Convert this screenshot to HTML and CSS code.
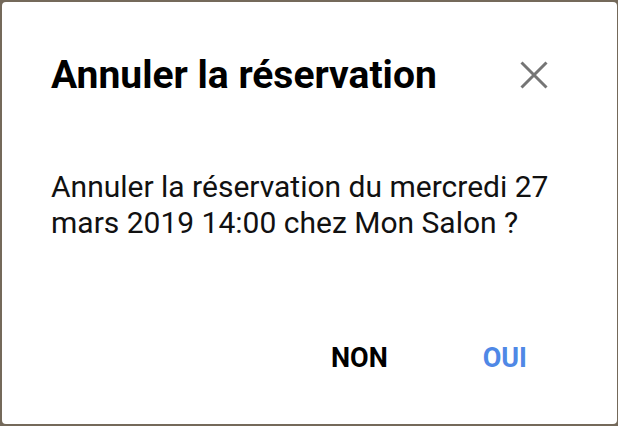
FILE: index.html
```html
<!DOCTYPE html>
<html lang="fr">
<head>
    <meta charset="UTF-8">
    <meta name="viewport" content="width=device-width, initial-scale=1.0">
    <title>Annuler la réservation</title>
    <link rel="stylesheet" href="styles.css">
</head>
<body>

<div class="dialog">
    <div class="dialog-header">
        <h2>Annuler la réservation</h2>
        <button class="close" aria-label="Fermer">
            <svg width="28" height="28" viewBox="0 0 28 28">
                <path d="M1.5 1.5 L26.5 26.5 M26.5 1.5 L1.5 26.5" stroke="#757575" stroke-width="3" fill="none"/>
            </svg>
        </button>
    </div>
    <p class="dialog-body">Annuler la réservation du mercredi 27 mars 2019 14:00 chez Mon Salon ?</p>
    <div class="dialog-actions">
        <button class="btn">NON</button>
        <button class="btn primary">OUI</button>
    </div>
</div>

</body>
</html>
```

FILE: styles.css
```css
body {
    margin: 0;
    padding: 2px 1px 2px 2px;
    font-family: Roboto, "Liberation Sans", sans-serif;
    background-color: #74695a;
    height: 422px;
    box-sizing: content-box;
}
.dialog {
    background-color: white;
    border-radius: 4px;
    height: 422px;
    box-sizing: border-box;
    padding: 0 51px 0 49px;
    display: flex;
    flex-direction: column;
}
.dialog-header {
    display: flex;
    align-items: center;
    justify-content: space-between;
    padding-top: 50px;
}
.dialog-header h2 {
    margin: 0;
    font-size: 39px;
    font-weight: 700;
    line-height: 46px;
    color: #000;
}
.close {
    border: none;
    background: none;
    padding: 0;
    margin-right: 18px;
    width: 28px;
    height: 28px;
    display: flex;
}
.dialog-body {
    margin: 71px 0 0;
    font-size: 30px;
    line-height: 36px;
    color: #111;
}
.dialog-actions {
    display: flex;
    justify-content: flex-end;
    gap: 95px;
    margin-top: 101px;
    padding-right: 39px;
}
.btn {
    border: none;
    background: none;
    padding: 0;
    font-family: Roboto, "Liberation Sans", sans-serif;
    font-size: 27px;
    font-weight: 700;
    color: #000;
}
.btn.primary {
    color: #4f88e6;
}
```
